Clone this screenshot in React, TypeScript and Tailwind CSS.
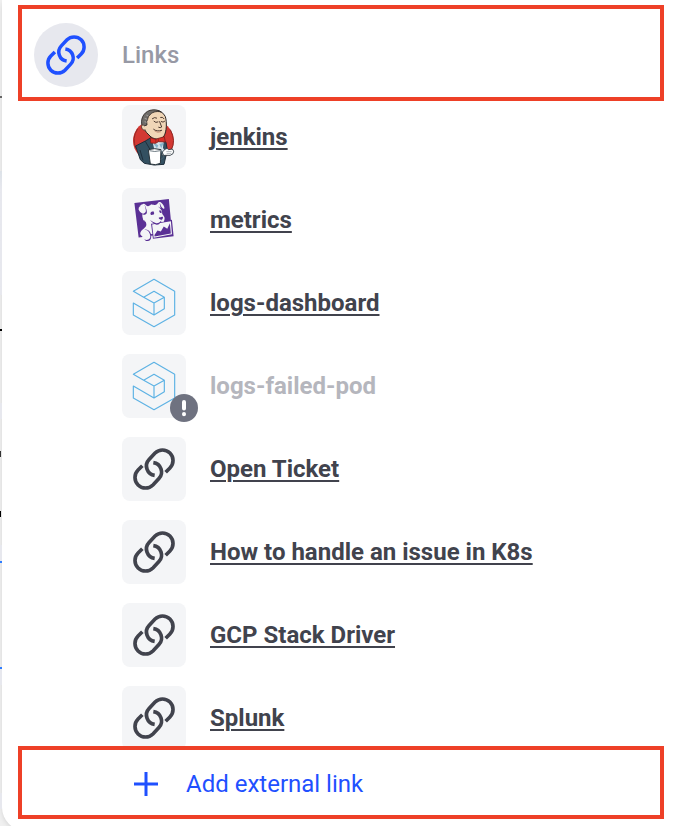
import type { ReactNode } from "react";
import { SiDatadog } from "react-icons/si";

function ChainIcon({ className }: { className: string }) {
  return (
    <svg
      viewBox="0 0 126 126"
      className={className}
      fill="none"
      stroke="currentColor"
      strokeWidth="11"
      aria-hidden="true"
    >
      <path d="M65 82A28.5 28.5 0 0 1 48.2 34.2L66.2 15.2A31.5 31.5 0 0 1 110.8 59.8L98 72.6" />
      <path d="M61 44A28.5 28.5 0 0 1 77.8 91.8L59.8 110.8A31.5 31.5 0 0 1 15.2 66.2L28 53.4" />
    </svg>
  );
}

function JenkinsIcon() {
  return (
    <svg viewBox="21 28 192 192" className="size-16" aria-hidden="true">
      <circle cx="115" cy="135" r="61" fill="#d33833" />
      <path d="M68 99Q49 129 63 158M166 102Q184 136 168 164" fill="none" stroke="#8e2622" strokeWidth="3" />
      <path d="M62 151L91 136L108 126L144 130L153 141L157 163L147 206L117 208L88 203L76 192Z" fill="#335061" stroke="#1d2d3a" strokeWidth="3" strokeLinejoin="round" />
      <path d="M91 137L106 163L116 163M75 163L84 194" fill="none" stroke="#1a2834" strokeWidth="2.5" />
      <path d="M87 100C79 90 80 66 94 54C111 38 142 42 151 63C156 79 155 108 147 121C139 134 120 132 108 124L95 111Z" fill="#f0d6b7" stroke="#2b2523" strokeWidth="3" strokeLinejoin="round" />
      <path d="M83 94C73 73 86 49 105 44C117 40 131 43 139 49C124 45 109 50 104 59C97 63 100 72 95 77L96 88L87 91Z" fill="#6f6c69" stroke="#2b2523" strokeWidth="2.5" />
      <path d="M94 58L99 61M89 68L97 71M89 78L95 80" stroke="#c4c0ba" strokeWidth="2" />
      <path d="M86 89Q78 86 80 97Q84 106 92 103" fill="#f0d6b7" stroke="#4a3428" strokeWidth="2.5" />
      <path d="M112 69Q119 63 125 67M137 65Q144 63 147 69M117 77Q122 83 129 79M139 78Q144 82 149 77M134 78L140 94Q136 98 131 95M116 101Q125 109 140 104" fill="none" stroke="#3b2923" strokeWidth="2.7" strokeLinecap="round" />
      <path d="M119 106Q128 113 138 108" fill="none" stroke="#b97a64" strokeWidth="2" />
      <path d="M112 137L128 134L146 137L144 157L151 168L119 165Z" fill="#d5e2ea" />
      <path d="M120 143L130 149L126 158L116 145M133 145L146 141L139 158Z" fill="#86b3c9" />
      <path d="M106 126L122 131L127 129L148 123L151 139L130 138L122 143L107 142Z" fill="#d92d27" stroke="#7b211d" strokeWidth="2.5" strokeLinejoin="round" />
      <path d="M123 131L122 141M130 130L130 138" stroke="#7b211d" strokeWidth="2" />
      <path d="M143 168L150 161Q157 155 161 162L172 160Q179 166 174 174Q168 182 151 179L141 180Z" fill="#fff" stroke="#29343b" strokeWidth="2.5" />
      <path d="M154 168L170 168M155 174L169 174" stroke="#8a9298" strokeWidth="2" />
      <path d="M100 162Q119 156 138 162L136 203Q122 210 106 205Z" fill="#fff" stroke="#29343b" strokeWidth="3" />
      <path d="M103 165Q119 170 136 165M137 170Q149 171 145 185Q142 191 136 191" fill="none" stroke="#53616b" strokeWidth="2.5" />
    </svg>
  );
}

function MetricsIcon() {
  return (
    <SiDatadog className="size-[42px] text-[#5a3095]" aria-hidden="true" />
  );
}

function CubeIcon() {
  return (
    <svg
      viewBox="21 18 192 192"
      className="size-16"
      fill="none"
      stroke="#5db2e4"
      strokeWidth="3.5"
      strokeLinejoin="round"
      aria-hidden="true"
    >
      <path d="M86 97L55 79L117 43L179 79V150L117 185L55 150V114L117 150L148 131V97L117 79L86 97L117 114L148 97M117 114V150" />
    </svg>
  );
}

type LinkItem = { label: string; icon: ReactNode; disabled?: boolean };

const chain = <ChainIcon className="size-[42px] text-[#41434d]" />;

const items: LinkItem[] = [
  { label: "jenkins", icon: <JenkinsIcon /> },
  { label: "metrics", icon: <MetricsIcon /> },
  { label: "logs-dashboard", icon: <CubeIcon /> },
  { label: "logs-failed-pod", icon: <CubeIcon />, disabled: true },
  { label: "Open Ticket", icon: chain },
  { label: "How to handle an issue in K8s", icon: chain },
  { label: "GCP Stack Driver", icon: chain },
  { label: "Splunk", icon: chain },
];

function WarningBadge() {
  return (
    <span className="absolute -right-3 -bottom-1 flex size-7 items-center justify-center rounded-full bg-[#6f7280]">
      <svg viewBox="0 0 28 28" className="size-7" fill="none" stroke="#fff" strokeWidth="4" strokeLinecap="round" aria-hidden="true">
        <path d="M14 8V14.5M14 20V20.2" />
      </svg>
    </span>
  );
}

/* The sliver of the page that stays visible beside the drawer. */
function PageEdge() {
  return (
    <div className="relative w-0.5 shrink-0" aria-hidden="true">
      <div className="h-24" />
      <div className="h-0.5 bg-[#666666]" />
      <div className="h-[73px]" />
      <div className="h-[124px] bg-linear-to-b from-[#dde2e8] to-[#e7e8ee] to-15%" />
      <div className="h-[34px]" />
      <div className="h-0.5 bg-black" />
      <div className="h-[72px]" />
      <div className="h-4 bg-[#e7e8ee]" />
      <div className="h-8" />
      <div className="h-1.5 w-px bg-[#333333]" />
      <div className="h-[54px]" />
      <div className="h-1.5 w-px bg-black" />
      <div className="h-7" />
      <div className="h-4 bg-[#e7e8ee]" />
      <div className="h-0.5 bg-[#2f7dff]" />
      <div className="h-[104px]" />
      <div className="h-0.5 bg-[#2f7dff]" />
      <div className="h-4 bg-[#e7e8ee]" />
      <div className="h-[108px]" />
      <div className="h-4 bg-[#e7e8ee]" />
    </div>
  );
}

export default function App() {
  return (
    <div className="flex h-screen overflow-hidden bg-[#f0f0f0] font-[Roboto,sans-serif] text-2xl text-[#41434d]">
      <PageEdge />
      <main className="min-w-0 flex-1 self-start rounded-bl-3xl bg-white pt-[5px] pr-7 pb-3 pl-4 shadow-[0_2px_6px_-2px_rgba(0,0,0,0.2)]">
        <header className="flex items-center gap-6 border-4 border-[#ee4027] px-3 pt-3.5 pb-2.5">
          <span className="flex size-16 shrink-0 items-center justify-center rounded-full bg-[#e7e8ee]">
            <ChainIcon className="size-10 text-[#1f50ff]" />
          </span>
          <h1 className="font-medium text-[#9799a5]">Links</h1>
        </header>
        <ul className="mt-1 flex flex-col gap-[19px] pl-[104px]">
          {items.map((item) => (
            <li key={item.label} className="flex items-center gap-6">
              <span className="relative flex size-16 shrink-0 items-center justify-center rounded-lg bg-[#f4f5f7]">
                {item.icon}
                {item.disabled && <WarningBadge />}
              </span>
              {item.disabled ? (
                <span className="font-bold text-[#b5b6bd]">{item.label}</span>
              ) : (
                <a href="#" className="font-bold underline decoration-2 underline-offset-3">
                  {item.label}
                </a>
              )}
            </li>
          ))}
        </ul>
        <div className="relative -mt-1 border-4 border-[#ee4027] bg-white pt-5 pb-[17px] pl-28">
          <button type="button" className="flex items-center gap-7 leading-7 text-[#1f50ff]">
            <svg viewBox="0 0 24 24" className="size-6" stroke="currentColor" strokeWidth="3" aria-hidden="true">
              <path d="M12 0V24M0 12H24" />
            </svg>
            Add external link
          </button>
        </div>
      </main>
    </div>
  );
}
